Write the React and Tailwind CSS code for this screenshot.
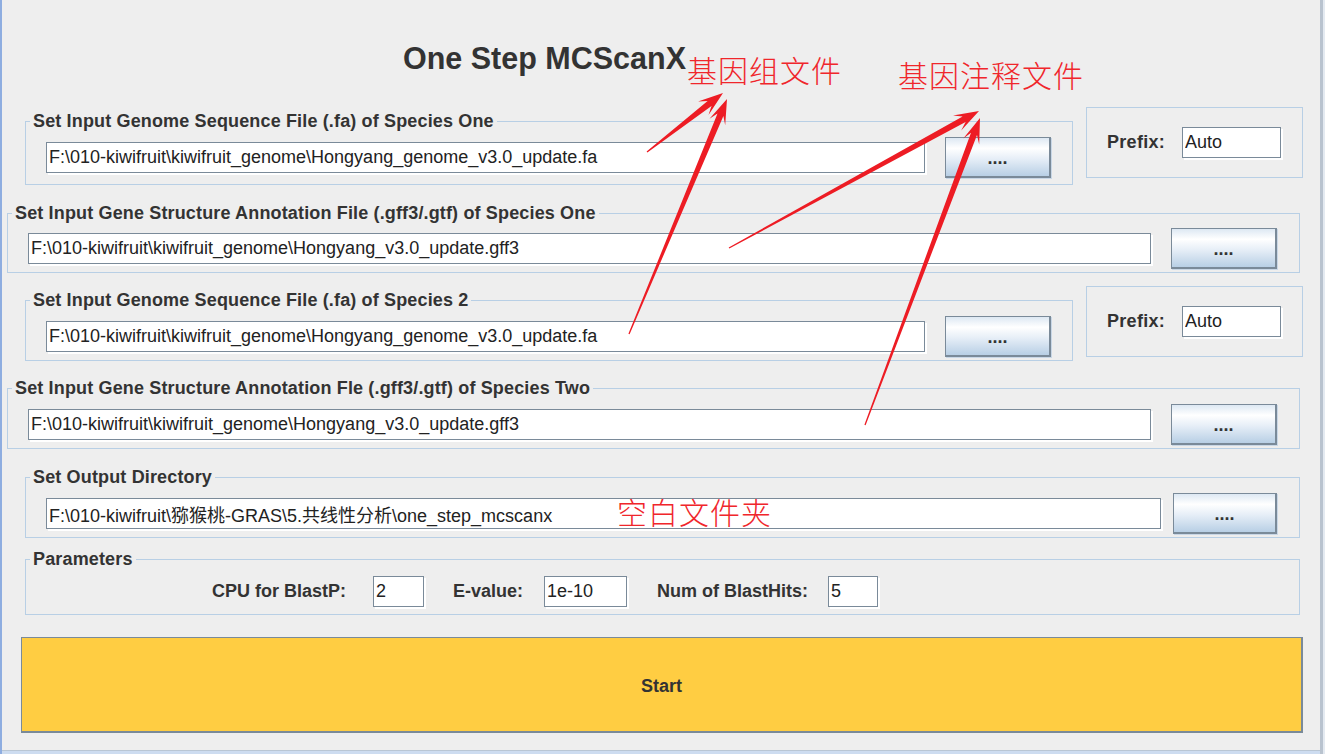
import React from 'react';

const BTN_BG =
  'bg-[linear-gradient(to_bottom,#dde8f3_0%,#ffffff_27%,#e6eef7_55%,#b8cfe5_100%)]';

const arrows = [
  [[647, 152], [723, 93]],
  [[629, 334], [727, 99]],
  [[729, 248], [979, 111]],
  [[865, 425], [980, 118]],
];

// tapered shaft + swept-back head, like the screenshot tool's arrows
function arrowPoints([x1, y1], [x2, y2]) {
  const dx = x2 - x1;
  const dy = y2 - y1;
  const len = Math.hypot(dx, dy);
  const ux = dx / len;
  const uy = dy / len;
  const nx = -uy;
  const ny = ux;
  const pt = (a, s) => `${(x1 + ux * a + nx * s).toFixed(1)},${(y1 + uy * a + ny * s).toFixed(1)}`;
  return [
    pt(0, 0.6),
    pt(len - 17, 3.2),
    pt(len - 25, 8.5),
    pt(len, 0),
    pt(len - 25, -8.5),
    pt(len - 17, -3.2),
    pt(0, -0.6),
  ].join(' ');
}

function Field({ value, className = '' }) {
  return (
    <input
      readOnly
      defaultValue={value}
      className={`h-[31px] min-w-0 border border-[#7a8a99] bg-white px-[2px] text-[18px] text-[#222] shadow-[2px_2px_0_#ffffff] outline-none ${className}`}
    />
  );
}

function Browse({ className = 'w-[106px]' }) {
  return (
    <button
      className={`h-[41px] shrink-0 border border-r-2 border-b-2 border-[#7a8a99] ${BTN_BG} pt-[2px] text-[18px] font-bold leading-none text-[#333] shadow-[1px_1px_0_#c9d7e6] ${className}`}
    >
      ....
    </button>
  );
}

function Section({ title, className = '', inner = '', children }) {
  return (
    <fieldset className={`min-w-0 border border-[#b8cfe5] ${className}`}>
      <legend className="ml-[4px] px-[3px] text-[18px] font-bold leading-[22px] tracking-[0.15px] text-[#333]">
        {title}
      </legend>
      <div className={`flex items-center ${inner}`}>{children}</div>
    </fieldset>
  );
}

function Prefix() {
  return (
    <div className="ml-[13px] flex h-[71px] w-[217px] items-center border border-[#b8cfe5] pl-[20px] pr-[21px]">
      <span className="text-[18px] font-bold tracking-[0.3px] text-[#333]">Prefix:</span>
      <Field value="Auto" className="ml-auto w-[99px]" />
    </div>
  );
}

export default function App() {
  return (
    <div className="relative h-[754px] w-[1325px] overflow-hidden bg-[#eeeeee] font-['Liberation_Sans','Noto_Sans_CJK_SC',sans-serif] text-[#333] shadow-[inset_2px_0_0_#8eade0,inset_-2px_0_0_#e4eaf1,inset_-5px_0_0_#b9c3cf,inset_0_-3px_0_#cddcf0,inset_0_-4px_0_#b9c6d4]">
      <div className="flex flex-col">
        <h1 className="ml-[25px] mt-[40px] w-[1039px] text-center text-[30.5px] font-bold leading-[36px] text-[#333]">
          One Step MCScanX
        </h1>

        <div className="mt-[31px] flex items-start">
          <Section
            title="Set Input Genome Sequence File (.fa) of Species One"
            className="ml-[25px] mt-[3px] w-[1048px]"
            inner="gap-[20px] pl-[20px] pr-[21px] pt-[5px] pb-[6px]"
          >
            <Field value="F:\010-kiwifruit\kiwifruit_genome\Hongyang_genome_v3.0_update.fa" className="flex-1" />
            <Browse />
          </Section>
          <Prefix />
        </div>

        <Section
          title="Set Input Gene Structure Annotation File (.gff3/.gtf) of Species One"
          className="ml-[7px] mt-[17px] w-[1293px]"
          inner="gap-[20px] pl-[20px] pr-[22px] pt-[4px] pb-[3px]"
        >
          <Field value="F:\010-kiwifruit\kiwifruit_genome\Hongyang_v3.0_update.gff3" className="flex-1" />
          <Browse />
        </Section>

        <div className="mt-[13px] flex items-start">
          <Section
            title="Set Input Genome Sequence File (.fa) of Species 2"
            className="ml-[25px] mt-[3px] w-[1048px]"
            inner="gap-[20px] pl-[20px] pr-[21px] pt-[5px] pb-[3px]"
          >
            <Field value="F:\010-kiwifruit\kiwifruit_genome\Hongyang_genome_v3.0_update.fa" className="flex-1" />
            <Browse />
          </Section>
          <Prefix />
        </div>

        <Section
          title="Set Input Gene Structure Annotation Fle (.gff3/.gtf) of Species Two"
          className="ml-[7px] mt-[16px] w-[1293px]"
          inner="gap-[20px] pl-[20px] pr-[22px] pt-[5px] pb-[3px]"
        >
          <Field value="F:\010-kiwifruit\kiwifruit_genome\Hongyang_v3.0_update.gff3" className="flex-1" />
          <Browse />
        </Section>

        <Section
          title="Set Output Directory"
          className="ml-[25px] mt-[17px] w-[1275px]"
          inner="gap-[12px] pl-[20px] pr-[22px] pt-[5px] pb-[3px]"
        >
          <Field value="F:\010-kiwifruit\猕猴桃-GRAS\5.共线性分析\one_step_mcscanx" className="flex-1" />
          <Browse className="w-[104px]" />
        </Section>

        <Section title="Parameters" className="ml-[25px] mt-[10px] w-[1275px]" inner="pl-[186px] pt-[6px] pb-[7px]">
          <span className="w-[161px] text-[18px] font-bold">CPU for BlastP:</span>
          <Field value="2" className="w-[51px]" />
          <span className="ml-[29px] w-[91px] text-[18px] font-bold">E-value:</span>
          <Field value="1e-10" className="w-[83px]" />
          <span className="ml-[30px] w-[171px] text-[18px] font-bold">Num of BlastHits:</span>
          <Field value="5" className="w-[50px]" />
        </Section>

        <button className="ml-[21px] mt-[22px] h-[96px] w-[1282px] border border-r-2 border-b-2 border-[#7a8a99] bg-[#ffcd42] pt-[3px] text-[18px] font-bold text-[#333]">
          Start
        </button>
      </div>

      <svg className="pointer-events-none absolute inset-0" width="1325" height="754">
        {arrows.map(([a, b], i) => (
          <polygon key={i} points={arrowPoints(a, b)} fill="#ed1c24" />
        ))}
      </svg>

      <span className="pointer-events-none absolute left-[687px] top-[57px] text-[30px] font-light leading-[30px] tracking-[1px] text-[#f0262b]">
        基因组文件
      </span>
      <span className="pointer-events-none absolute left-[898px] top-[62px] text-[30px] font-light leading-[30px] tracking-[1px] text-[#f0262b]">
        基因注释文件
      </span>
      <span className="pointer-events-none absolute left-[617px] top-[499px] text-[30px] font-light leading-[30px] tracking-[1px] text-[#f0262b]">
        空白文件夹
      </span>
    </div>
  );
}
